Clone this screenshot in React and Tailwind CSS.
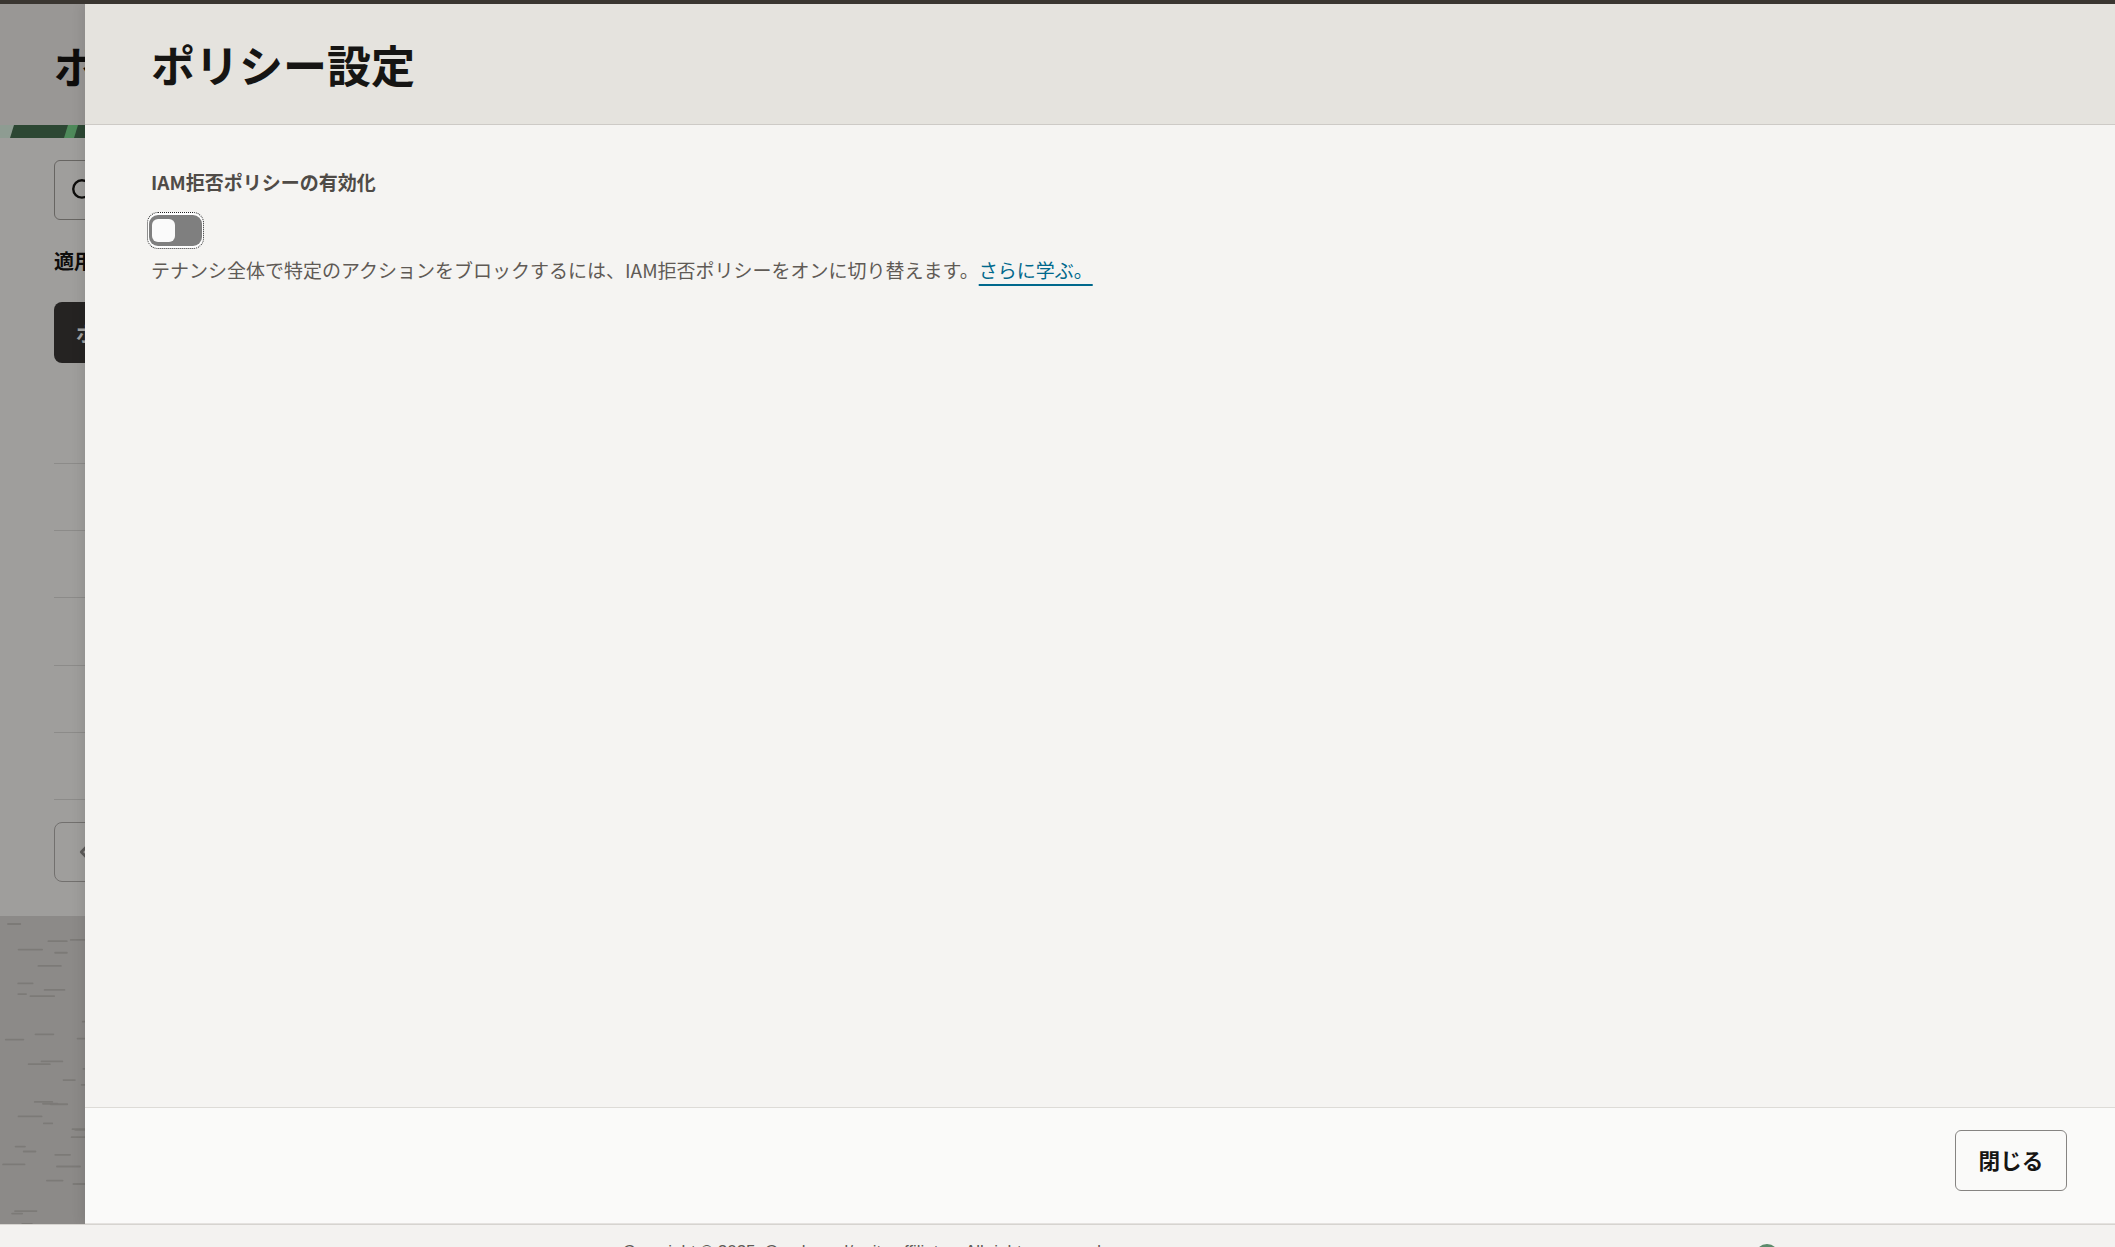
import { Search, ChevronLeft } from 'lucide-react'

const FONT = "font-['Noto_Sans_CJK_JP','Noto_Sans',sans-serif]"

// decorative background pattern at the bottom of the underlying page
const Texture = () => {
  let seed = 11
  const rnd = () => {
    seed = (seed * 9301 + 49297) % 233280
    return seed / 233280
  }
  const marks = Array.from({ length: 150 }, () => ({
    x: rnd() * 420,
    y: rnd() * 320,
    w: 8 + rnd() * 18,
  }))
  return (
    <svg width="420" height="320" className="absolute top-0 left-0">
      <defs>
        <filter id="soft">
          <feGaussianBlur stdDeviation="0.6" />
        </filter>
      </defs>
      <g filter="url(#soft)">
        {marks.map((m, i) => (
          <rect key={i} x={m.x} y={m.y} width={m.w} height="1.8" rx="0.9" fill="#c3bfbb" />
        ))}
      </g>
    </svg>
  )
}

const GreenBand = () => (
  <svg width="420" height="13" className="block shrink-0">
    <rect width="420" height="13" fill="#466f50" />
    <polygon points="0,0 14,0 10,13 0,13" fill="#dff4e4" />
    <polygon points="68,0 78,0 74,13 64,13" fill="#7ad88d" />
    <polygon points="160,0 200,0 186,13 150,13" fill="#5f9a6c" />
  </svg>
)

const BackgroundPage = () => (
  <div className="flex h-full w-[900px] flex-col bg-[#f9f7f4]">
    <div className="flex h-[121px] shrink-0 items-center bg-[#efece9] px-[54px]">
      <h1 className="text-[44px] font-bold text-[#161513]">ポリシー</h1>
    </div>
    <GreenBand />
    <div className="flex shrink-0 flex-col px-[54px]">
      <div className="mt-[22px] flex h-[60px] w-[420px] shrink-0 items-center rounded-[6px] border border-[#a29e9a] pl-[15px]">
        <Search size={26} strokeWidth={2.2} className="text-[#161513]" />
        <span className="ml-3 text-[19px] text-[#6f6a65]">ポリシーの検索</span>
      </div>
      <div className="mt-[26px] text-[20px] leading-[30px] font-bold text-[#161513]">適用範囲</div>
      <button className="mt-[26px] h-[61px] w-[230px] shrink-0 rounded-[8px] bg-[#3a3836] pl-[22px] text-left text-[21px] font-bold text-white">
        ポリシーの作成
      </button>
      <div className="h-[101px] shrink-0 border-b border-[#dcd9d6]" />
      {[0, 1, 2, 3, 4].map((r) => (
        <div key={r} className="h-[67.2px] shrink-0 border-b border-[#dcd9d6]" />
      ))}
      <div className="mt-[22px] flex h-[60px] w-[120px] shrink-0 items-center rounded-[8px] border border-[#b3b0ad] pl-[18px]">
        <ChevronLeft size={22} strokeWidth={3} className="text-[#918e8b]" />
      </div>
    </div>
    <div className="relative mt-[34px] min-h-0 flex-1 overflow-hidden bg-[#dbd8d5]">
      <Texture />
    </div>
  </div>
)

const Toggle = () => (
  <button className="-ml-[4px] flex h-[37px] w-[57px] items-center rounded-[11px] border border-dotted border-[#222] bg-white p-[1px]">
    <span className="flex h-[31px] w-full items-center rounded-[9px] bg-[#7f7f7f] pl-[3px]">
      <span className="h-[23px] w-[23px] rounded-[6px] bg-[#fafafa]" />
    </span>
  </button>
)

const App = () => {
  return (
    <div className={`flex h-[1247px] w-full flex-col overflow-hidden bg-[#f3f2f0] ${FONT}`}>
      <div className="h-[4px] shrink-0 bg-[#3a3631]" />

      <div className="relative h-[1220px] shrink-0 overflow-hidden">
        <BackgroundPage />

        {/* dim overlay */}
        <div className="absolute inset-0 bg-black/[0.36]" />

        {/* drawer */}
        <div className="absolute top-0 right-0 bottom-0 left-[85px] flex flex-col bg-[#f5f4f2] shadow-[-4px_0_10px_rgba(0,0,0,0.08)]">
          <div className="flex h-[121px] shrink-0 items-center border-b border-[#cdcac6] bg-[#e5e3de] pl-[66px]">
            <h2 className="text-[44px] font-bold text-[#161513]">ポリシー設定</h2>
          </div>

          <div className="flex-1 pt-[43px] pl-[66px]">
            <div className="text-[19px] leading-[28px] font-bold text-[#4f4b47]">IAM拒否ポリシーの有効化</div>
            <div className="mt-[16px]">
              <Toggle />
            </div>
            <p className="mt-[7px] text-[19px] leading-[28px] text-[#5f5a55]">
              テナンシ全体で特定のアクションをブロックするには、IAM拒否ポリシーをオンに切り替えます。
              <a href="#" className="text-[#00688c] underline decoration-2 underline-offset-[6px]">
                さらに学ぶ。
              </a>
            </p>
          </div>

          <div className="flex h-[117px] shrink-0 items-start justify-end border-t border-b border-t-[#dddbd7] border-b-[#e4e2df] bg-[#fafaf9] pt-[22px] pr-[48px]">
            <button className="h-[61px] w-[112px] rounded-[6px] border border-[#868482] text-[21.6px] font-bold text-[#161513]">
              閉じる
            </button>
          </div>
        </div>
      </div>

      {/* page footer */}
      <div className="flex flex-1 items-start border-t border-[#d6d4d0] pt-[15px]">
        <span className="ml-[623px] font-['Liberation_Sans',sans-serif] text-[17px] leading-[24px] text-[#5f5a55]">
          Copyright © 2025, Oracle and/or its affiliates. All rights reserved.
        </span>
        <div className="mr-[17px] ml-auto flex items-center gap-[34px] pt-[2px]">
          <svg width="24" height="24" viewBox="0 0 24 24">
            <circle cx="12" cy="12" r="10" fill="none" stroke="#5b8a6b" strokeWidth="4" />
          </svg>
          <span className="text-[19px] text-[#00688c]">フィードバックをお送りください</span>
        </div>
      </div>
    </div>
  )
}

export default App
